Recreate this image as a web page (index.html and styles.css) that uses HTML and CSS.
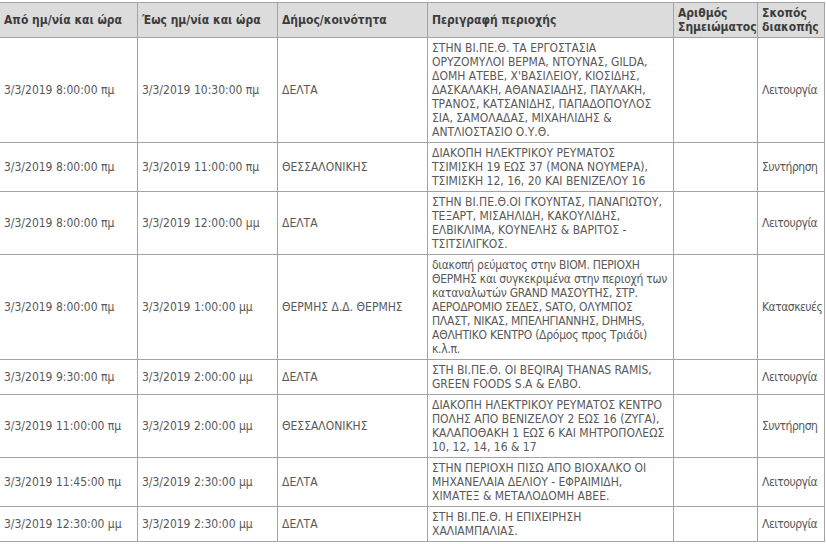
FILE: index.html
```html
<!DOCTYPE html>
<html lang="el">
<head>
<meta charset="utf-8">
<title>Διακοπές ρεύματος</title>
<link rel="stylesheet" href="styles.css">
</head>
<body>
<table class="outages">
  <colgroup>
    <col class="col-from">
    <col class="col-to">
    <col class="col-area">
    <col class="col-desc">
    <col class="col-note">
    <col class="col-purpose">
  </colgroup>
  <thead>
    <tr>
      <th>Από ημ/νία και ώρα</th>
      <th>Έως ημ/νία και ώρα</th>
      <th>Δήμος/κοινότητα</th>
      <th>Περιγραφή περιοχής</th>
      <th>Αριθμός Σημειώματος</th>
      <th>Σκοπός διακοπής</th>
    </tr>
  </thead>
  <tbody>
    <tr>
      <td>3/3/2019 8:00:00 πμ</td>
      <td>3/3/2019 10:30:00 πμ</td>
      <td>ΔΕΛΤΑ</td>
      <td>ΣΤΗΝ ΒΙ.ΠΕ.Θ. ΤΑ ΕΡΓΟΣΤΑΣΙΑ ΟΡΥΖΟΜΥΛΟΙ ΒΕΡΜΑ, ΝΤΟΥΝΑΣ, GILDA, ΔΟΜΗ ΑΤΕΒΕ, Χ'ΒΑΣΙΛΕΙΟΥ, ΚΙΟΣΙΔΗΣ, ΔΑΣΚΑΛΑΚΗ, ΑΘΑΝΑΣΙΑΔΗΣ, ΠΑΥΛΑΚΗ, ΤΡΑΝΟΣ, ΚΑΤΣΑΝΙΔΗΣ, ΠΑΠΑΔΟΠΟΥΛΟΣ ΣΙΑ, ΣΑΜΟΛΑΔΑΣ, ΜΙΧΑΗΛΙΔΗΣ &amp; ΑΝΤΛΙΟΣΤΑΣΙΟ Ο.Υ.Θ.</td>
      <td></td>
      <td class="purpose">Λειτουργία</td>
    </tr>
    <tr>
      <td>3/3/2019 8:00:00 πμ</td>
      <td>3/3/2019 11:00:00 πμ</td>
      <td>ΘΕΣΣΑΛΟΝΙΚΗΣ</td>
      <td>ΔΙΑΚΟΠΗ ΗΛΕΚΤΡΙΚΟΥ ΡΕΥΜΑΤΟΣ ΤΣΙΜΙΣΚΗ 19 ΕΩΣ 37 (ΜΟΝΑ ΝΟΥΜΕΡΑ), ΤΣΙΜΙΣΚΗ 12, 16, 20 ΚΑΙ ΒΕΝΙΖΕΛΟΥ 16</td>
      <td></td>
      <td class="purpose">Συντήρηση</td>
    </tr>
    <tr>
      <td>3/3/2019 8:00:00 πμ</td>
      <td>3/3/2019 12:00:00 μμ</td>
      <td>ΔΕΛΤΑ</td>
      <td>ΣΤΗΝ ΒΙ.ΠΕ.Θ.ΟΙ ΓΚΟΥΝΤΑΣ, ΠΑΝΑΓΙΩΤΟΥ, ΤΕΞΑΡΤ, ΜΙΣΑΗΛΙΔΗ, ΚΑΚΟΥΛΙΔΗΣ, ΕΛΒΙΚΛΙΜΑ, ΚΟΥΝΕΛΗΣ &amp; ΒΑΡΙΤΟΣ - ΤΣΙΤΣΙΛΙΓΚΟΣ.</td>
      <td></td>
      <td class="purpose">Λειτουργία</td>
    </tr>
    <tr>
      <td>3/3/2019 8:00:00 πμ</td>
      <td>3/3/2019 1:00:00 μμ</td>
      <td>ΘΕΡΜΗΣ Δ.Δ. ΘΕΡΜΗΣ</td>
      <td class="desc-lines">διακοπή ρεύματος στην ΒΙΟΜ. ΠΕΡΙΟΧΗ<br>ΘΕΡΜΗΣ και συγκεκριμένα στην περιοχή των<br>καταναλωτών GRAND ΜΑΣΟΥΤΗΣ, ΣΤΡ.<br>ΑΕΡΟΔΡΟΜΙΟ ΣΕΔΕΣ, SATO, ΟΛΥΜΠΟΣ<br>ΠΛΑΣΤ, ΝΙΚΑΣ, ΜΠΕΛΗΓΙΑΝΝΗΣ, DHMHS,<br>ΑΘΛΗΤΙΚΟ ΚΕΝΤΡΟ (Δρόμος προς Τριάδι)<br>κ.λ.π.</td>
      <td></td>
      <td class="purpose">Κατασκευές</td>
    </tr>
    <tr>
      <td>3/3/2019 9:30:00 πμ</td>
      <td>3/3/2019 2:00:00 μμ</td>
      <td>ΔΕΛΤΑ</td>
      <td>ΣΤΗ ΒΙ.ΠΕ.Θ. ΟΙ BEQIRAJ THANAS RAMIS, GREEN FOODS S.A &amp; ΕΛΒΟ.</td>
      <td></td>
      <td class="purpose">Λειτουργία</td>
    </tr>
    <tr>
      <td>3/3/2019 11:00:00 πμ</td>
      <td>3/3/2019 2:00:00 μμ</td>
      <td>ΘΕΣΣΑΛΟΝΙΚΗΣ</td>
      <td>ΔΙΑΚΟΠΗ ΗΛΕΚΤΡΙΚΟΥ ΡΕΥΜΑΤΟΣ ΚΕΝΤΡΟ ΠΟΛΗΣ ΑΠΟ ΒΕΝΙΖΕΛΟΥ 2 ΕΩΣ 16 (ΖΥΓΑ), ΚΑΛΑΠΟΘΑΚΗ 1 ΕΩΣ 6 ΚΑΙ ΜΗΤΡΟΠΟΛΕΩΣ 10, 12, 14, 16 &amp; 17</td>
      <td></td>
      <td class="purpose">Συντήρηση</td>
    </tr>
    <tr>
      <td>3/3/2019 11:45:00 πμ</td>
      <td>3/3/2019 2:30:00 μμ</td>
      <td>ΔΕΛΤΑ</td>
      <td>ΣΤΗΝ ΠΕΡΙΟΧΗ ΠΙΣΩ ΑΠΟ ΒΙΟΧΑΛΚΟ ΟΙ ΜΗΧΑΝΕΛΑΙΑ ΔΕΛΙΟΥ - ΕΦΡΑΙΜΙΔΗ, ΧΙΜΑΤΕΞ &amp; ΜΕΤΑΛΟΔΟΜΗ ΑΒΕΕ.</td>
      <td></td>
      <td class="purpose">Λειτουργία</td>
    </tr>
    <tr>
      <td>3/3/2019 12:30:00 μμ</td>
      <td>3/3/2019 2:30:00 μμ</td>
      <td>ΔΕΛΤΑ</td>
      <td>ΣΤΗ ΒΙ.ΠΕ.Θ. Η ΕΠΙΧΕΙΡΗΣΗ ΧΑΛΙΑΜΠΑΛΙΑΣ.</td>
      <td></td>
      <td class="purpose">Λειτουργία</td>
    </tr>
  </tbody>
</table>
</body>
</html>
```
FILE: styles.css
```css
html, body {
  margin: 0;
  padding: 0;
  background: #ffffff;
}

.outages {
  margin: 2px 0 0 -1px;
  width: 825px;
  table-layout: fixed;
  border-collapse: collapse;
  font-family: "DejaVu Sans Condensed", "DejaVu Sans", sans-serif;
  font-size: 12px;
  line-height: 14px;
  color: #585858;
}

.col-from { width: 138px; }
.col-to { width: 140px; }
.col-area { width: 150px; }
.col-desc { width: 246px; }
.col-note { width: 84px; }
.col-purpose { width: 67px; }

.outages th,
.outages td {
  border: 1px solid #a3a3a3;
  padding: 3px 4px 3px 4px;
  text-align: left;
  vertical-align: middle;
}

.outages th {
  background: #dcdcdc;
  color: #3c3c3c;
  font-weight: bold;
}

.outages .desc-lines {
  white-space: nowrap;
  letter-spacing: -0.25px;
}

.outages .purpose {
  letter-spacing: -0.5px;
  white-space: nowrap;
}
```
